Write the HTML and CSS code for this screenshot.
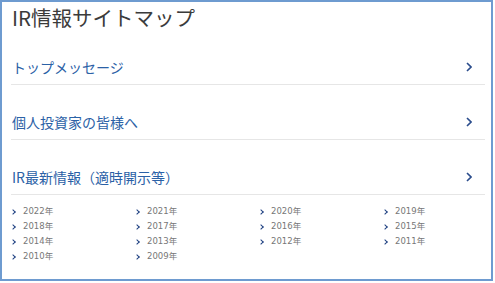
FILE: index.html
```html
<!DOCTYPE html>
<html lang="ja">
<head>
    <meta charset="utf-8">
    <title>IR情報サイトマップ</title>
    <link rel="stylesheet" href="styles.css">
</head>
<body>
    <div class="sitemap">
        <h1>IR情報サイトマップ</h1>
        <a class="row" href="#"><span>トップメッセージ</span><svg class="arrow" width="6" height="10" viewBox="0 0 6 10"><path d="M1 1 L5 5 L1 9" fill="none" stroke="#2a4c8c" stroke-width="1.6"/></svg></a>
        <a class="row" href="#"><span>個人投資家の皆様へ</span><svg class="arrow" width="6" height="10" viewBox="0 0 6 10"><path d="M1 1 L5 5 L1 9" fill="none" stroke="#2a4c8c" stroke-width="1.6"/></svg></a>
        <a class="row" href="#"><span>IR最新情報（適時開示等）</span><svg class="arrow" width="6" height="10" viewBox="0 0 6 10"><path d="M1 1 L5 5 L1 9" fill="none" stroke="#2a4c8c" stroke-width="1.6"/></svg></a>
        <ul class="years">
            <li><a href="#">2022年</a></li>
            <li><a href="#">2021年</a></li>
            <li><a href="#">2020年</a></li>
            <li><a href="#">2019年</a></li>
            <li><a href="#">2018年</a></li>
            <li><a href="#">2017年</a></li>
            <li><a href="#">2016年</a></li>
            <li><a href="#">2015年</a></li>
            <li><a href="#">2014年</a></li>
            <li><a href="#">2013年</a></li>
            <li><a href="#">2012年</a></li>
            <li><a href="#">2011年</a></li>
            <li><a href="#">2010年</a></li>
            <li><a href="#">2009年</a></li>
        </ul>
    </div>
</body>
</html>
```

FILE: styles.css
```css
body {
    margin: 0;
    background: #fff;
    font-family: "Noto Sans CJK JP", "Noto Sans", sans-serif;
}
.sitemap {
    width: 493px;
    height: 281px;
    border: 2px solid #6e9bd0;
    padding: 0 6px 0 9px;
    box-sizing: border-box;
}
h1 {
    margin: 0;
    height: 28px;
    line-height: 31px;
    font-size: 20.5px;
    font-weight: normal;
    color: #3b3b3b;
    padding-left: 1px;
}
.row {
    display: flex;
    justify-content: space-between;
    align-items: center;
    height: 20px;
    padding: 27px 13px 7px 1px;
    border-bottom: 1px solid #e6e6e6;
    text-decoration: none;
    color: #2b61a6;
    font-size: 14px;
}
.years {
    list-style: none;
    margin: 0;
    padding: 9px 0 0 0;
    display: grid;
    grid-template-columns: repeat(4, 124px);
}
.years li {
    height: 15px;
    line-height: 15px;
    font-size: 8.5px;
    font-family: "DejaVu Sans", "Noto Sans CJK JP", sans-serif;
}
.years a {
    color: #777;
    text-decoration: none;
    display: flex;
    align-items: center;
}
.years a::before {
    content: "";
    width: 3px;
    height: 3px;
    border-top: 1.8px solid #1d3f80;
    border-right: 1.8px solid #1d3f80;
    transform: rotate(45deg);
    margin: 0 8px 0 0;
}
```
